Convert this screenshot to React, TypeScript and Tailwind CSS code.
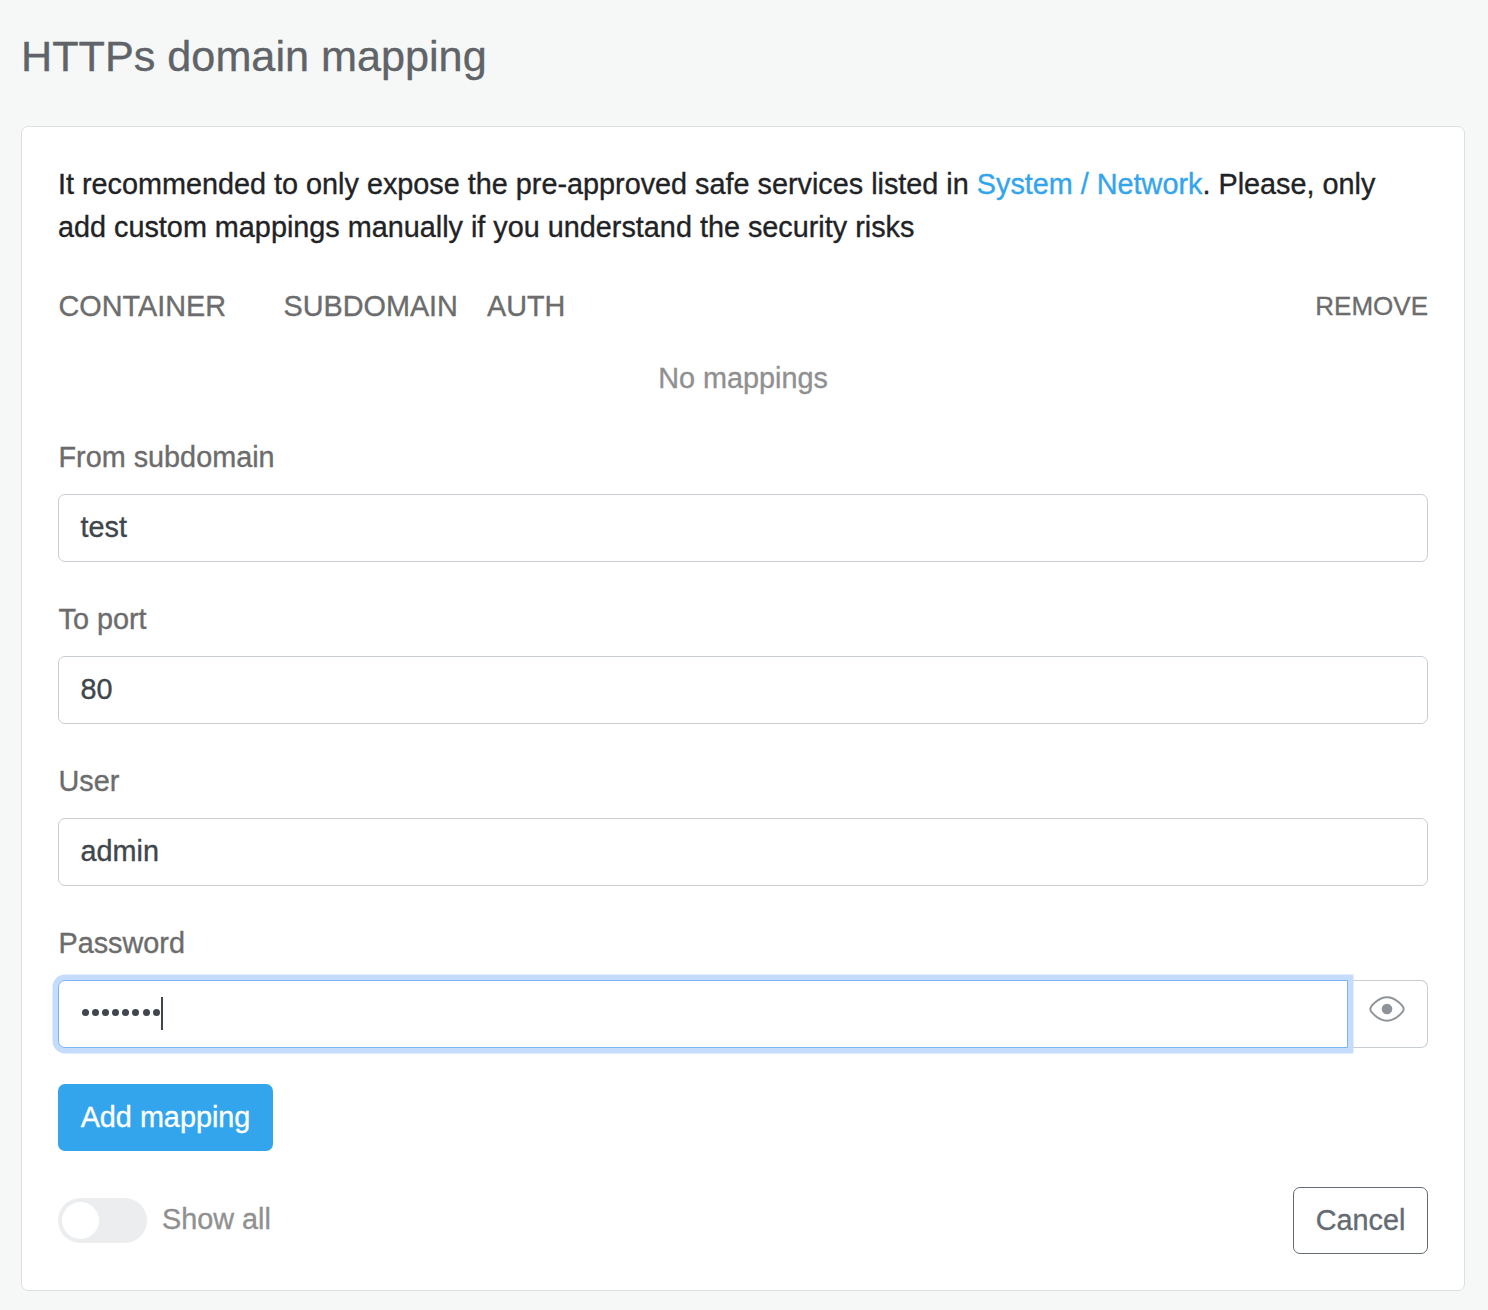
import type { ReactNode } from "react";

function Field({ label, value }: { label: string; value: string }) {
  return (
    <div className="mb-9">
      <Label>{label}</Label>
      <div className="flex h-[68px] items-center rounded-[7px] border border-[#c8ccd3] px-[21.5px] pb-[2px] text-[#40464c]">{value}</div>
    </div>
  );
}

function Label({ children }: { children: ReactNode }) {
  return <div className="mb-[15px] h-[43px] pl-[0.5px] leading-[43px] text-[#6c6c6c]">{children}</div>;
}

export default function App() {
  return (
    <main className="h-[1310px] w-[1488px] bg-[#f6f8f8] px-[21px] pt-[30px] font-['Liberation_Sans',Arial,sans-serif] text-[28.8px] leading-[43px] text-[#1f2326] [-webkit-text-stroke:0.35px]">
      <h1 className="h-[96px] text-[43.2px] leading-[52px] text-[#606367]">HTTPs domain mapping</h1>
      <section className="h-[1165px] w-[1444px] rounded-[7px] border border-[#dddfe0] bg-white px-9 pt-9">
        <p className="whitespace-nowrap">
          It recommended to only expose the pre-approved safe services listed in <a className="text-[#33a5ec]">System / Network</a>. Please, only<br />
          add custom mappings manually if you understand the security risks
        </p>
        <div className="mt-9 flex h-[43px] text-[#6c6c6c]">
          <span className="w-[225px] pl-[0.5px]">CONTAINER</span>
          <span className="w-[204px] pl-[0.5px]">SUBDOMAIN</span>
          <span>AUTH</span>
          <span className="ml-auto text-[26px]">REMOVE</span>
        </div>
        <div className="mt-[29px] mb-9 text-center text-[#909090]">No mappings</div>
        <Field label="From subdomain" value="test" />
        <Field label="To port" value="80" />
        <Field label="User" value="admin" />
        <Label>Password</Label>
        <div className="flex h-[68px]">
          <div className="z-10 flex w-[1290px] items-center rounded-l-[7px] border border-[#7db3f7] bg-white pl-[23px] ring-[5.5px] ring-[#c5dcfc]">
            <div className="-mt-[3px] flex gap-[3.1px]">
              {Array.from({ length: 8 }, (_, i) => <i key={i} className="size-[7px] rounded-full bg-[#40464c]" />)}
            </div>
            <i className="-mt-px ml-[1.3px] h-[33px] w-[2px] bg-[#40464c]" />
          </div>
          <div className="flex flex-1 justify-center rounded-r-[7px] border border-l-0 border-[#c8ccd3] pt-[14px] pr-[2px]">
            <svg width="36" height="28" viewBox="0 0 36 28" fill="none">
              <path d="M1.3 14C1.3 11.5 9 2.3 18 2.3S34.7 11.5 34.7 14C34.7 16.5 27 25.7 18 25.7S1.3 16.5 1.3 14Z" stroke="#8f9499" strokeWidth="2" />
              <circle cx="18" cy="14" r="5.3" fill="#8f9499" />
            </svg>
          </div>
        </div>
        <button className="mt-9 block h-[67px] w-[215px] rounded-[7px] bg-[#33a5ec] text-white">Add mapping</button>
        <div className="mt-9 flex h-[67px] items-center">
          <div className="h-[45px] w-[89px] rounded-full bg-[#ebedef] p-1"><div className="size-[37px] rounded-full bg-white" /></div>
          <span className="ml-[15px] pb-[2px] text-[#909090]">Show all</span>
          <button className="ml-auto h-[67px] w-[135px] rounded-[7px] border border-[#646b72] text-[#646b72]">Cancel</button>
        </div>
      </section>
    </main>
  );
}
